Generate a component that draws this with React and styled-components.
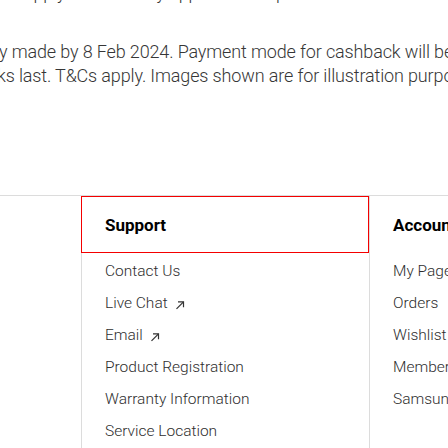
import React from "react";
import styled, { createGlobalStyle } from "styled-components";

const GlobalStyle = createGlobalStyle`
  body {
    margin: 0;
    background: #fff;
    font-family: Roboto, "Liberation Sans", Arial, sans-serif;
  }
`;

const Page = styled.div`
  width: 448px;
  height: 448px;
  overflow: hidden;
  background: #fff;
`;

const Disclaimer = styled.div`
  margin-top: -19px;
  overflow: hidden;
  color: #363636;
  font-size: 18px;
  font-weight: 300;
  letter-spacing: -0.14px;
  line-height: 24px;
`;

const Paragraph = styled.div`
  margin-bottom: ${(p) => p.$gap || 0}px;
`;

const Line = styled.div`
  white-space: nowrap;
  margin-left: ${(p) => p.$shift || 0}px;
`;

const Footer = styled.div`
  display: flex;
  margin-top: 107px;
  border-top: 1px solid #dcdcdc;
  height: 252px;
`;

const Spacer = styled.div`
  flex: 0 0 81px;
`;

const Column = styled.div`
  flex: 0 0 288px;
  box-sizing: border-box;
  border-left: 1px solid #dcdcdc;
`;

const Heading = styled.div`
  display: flex;
  align-items: center;
  box-sizing: border-box;
  height: 57px;
  margin-left: -1px;
  padding-left: 23px;
  border: 1px solid ${(p) => (p.$focused ? "#f40000" : "transparent")};
  font-size: 17px;
  font-weight: 700;
  color: #000;
  white-space: nowrap;
`;

const List = styled.ul`
  list-style: none;
  margin: 0;
  padding: 2px 0 0 23px;
`;

const Item = styled.li`
  display: flex;
  align-items: center;
  gap: 7px;
  height: 32px;
  font-size: 15.5px;
  font-weight: 300;
  color: #2e2e2e;
  white-space: nowrap;
`;

const Arrow = styled.svg`
  width: 10px;
  height: 10px;
  margin-top: 3px;
  flex: none;
`;

function ExternalIcon() {
  return (
    <Arrow viewBox="0 0 10 10" fill="none" stroke="#333" strokeWidth="1.2">
      <path d="M1.5 8.8 L8.5 1.8" />
      <path d="M3 1.8 H8.5 V7.3" />
    </Arrow>
  );
}

const columns = [
  {
    title: "Support",
    focused: true,
    items: [
      { label: "Contact Us" },
      { label: "Live Chat", external: true },
      { label: "Email", external: true },
      { label: "Product Registration" },
      { label: "Warranty Information" },
      { label: "Service Location" },
    ],
  },
  {
    title: "Account",
    items: [
      { label: "My Page" },
      { label: "Orders" },
      { label: "Wishlist" },
      { label: "Membership" },
      { label: "Samsung Account" },
    ],
  },
];

export default function App() {
  return (
    <Page>
      <GlobalStyle />
      <Disclaimer>
        <Paragraph $gap={35}>
          <Line $shift={-30}>
            Terms apply. Offer is only applicable on purchases made through the Samsung Shop App.
          </Line>
        </Paragraph>
        <Paragraph>
          <Line $shift={-1}>
            y made by 8 Feb 2024. Payment mode for cashback will be credited accordingly.
          </Line>
          <Line $shift={-3}>
            ks last. T&amp;Cs apply. Images shown are for illustration purposes only.
          </Line>
        </Paragraph>
      </Disclaimer>
      <Footer>
        <Spacer />
        {columns.map((col) => (
          <Column key={col.title}>
            <Heading $focused={col.focused}>{col.title}</Heading>
            <List>
              {col.items.map((it) => (
                <Item key={it.label}>
                  {it.label}
                  {it.external && <ExternalIcon />}
                </Item>
              ))}
            </List>
          </Column>
        ))}
      </Footer>
    </Page>
  );
}
